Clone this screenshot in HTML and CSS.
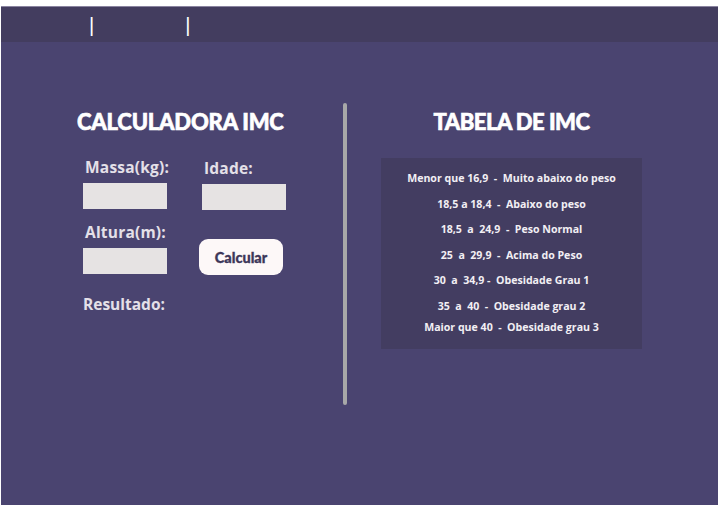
FILE: index.html
```html
<!DOCTYPE html>
<html lang="pt">
<head>
<meta charset="utf-8">
<title>Calculadora IMC</title>
<link rel="stylesheet" href="styles.css">
</head>
<body>
<div class="frame">
  <header class="topbar">
    <span class="sep sep-a">|</span>
    <span class="sep sep-b">|</span>
  </header>
  <main class="content">
    <section class="calc">
      <h1 class="calc-title">CALCULADORA IMC</h1>
      <div class="row">
        <div class="field">
          <label class="label">Massa(kg):</label>
          <input class="input" type="text">
        </div>
        <div class="field field-idade">
          <label class="label">Idade:</label>
          <input class="input" type="text">
        </div>
      </div>
      <div class="row row-2">
        <div class="field">
          <label class="label">Altura(m):</label>
          <input class="input" type="text">
        </div>
        <button class="btn" type="button">Calcular</button>
      </div>
      <p class="resultado">Resultado:</p>
    </section>
    <div class="divider"></div>
    <section class="tabela">
      <h2 class="tabela-title">TABELA DE IMC</h2>
      <div class="tabela-box">
        <p class="linha">Menor que 16,9  -  Muito abaixo do peso</p>
        <p class="linha">18,5 a 18,4  -  Abaixo do peso</p>
        <p class="linha">18,5  a  24,9  -  Peso Normal</p>
        <p class="linha">25  a  29,9  -  Acima do Peso</p>
        <p class="linha">30  a  34,9 -  Obesidade Grau 1</p>
        <p class="linha">35  a  40  -  Obesidade grau 2</p>
        <p class="linha linha-last">Maior que 40  -  Obesidade grau 3</p>
      </div>
    </section>
  </main>
</div>
</body>
</html>
```
FILE: styles.css
```css
* { box-sizing: border-box; }
html, body { margin: 0; padding: 0; background: #ffffff; }
body { width: 720px; height: 506px; overflow: hidden; }

.frame {
  margin: 6px 2px 0 1px;
  height: 499px;
  background: #4a4470;
  display: flex;
  flex-direction: column;
}

.topbar {
  height: 36px;
  background: #433d5f;
  border-top: 1px solid #8a84a0;
  display: flex;
  align-items: center;
  font-family: "Liberation Sans", sans-serif;
  color: #ffffff;
  font-size: 20px;
  line-height: 1;
}
.sep-a { margin-left: 88px; }
.sep-b { margin-left: 91px; }

.content {
  flex: 1;
  display: flex;
  align-items: flex-start;
}

.calc {
  width: 342px;
  padding-left: 76px;
  font-family: "Open Sans", sans-serif;
}
.calc-title {
  margin: 66px 0 0 0;
  font-family: "Lato", sans-serif;
  font-weight: 900;
  font-size: 22px;
  line-height: 28px;
  color: #ffffff;
  letter-spacing: -0.2px;
  -webkit-text-stroke: 0.6px #ffffff;
}

.row {
  display: flex;
  margin-top: 20px;
  margin-left: 6px;
}
.row-2 { margin-top: 11px; align-items: flex-end; }

.field {
  display: flex;
  flex-direction: column;
  width: 84px;
}
.field-idade { margin-left: 35px; padding-top: 1px; }

.label {
  font-weight: 700;
  font-size: 15.5px;
  line-height: 22px;
  color: #e4e0e8;
  margin-left: 2px;
  letter-spacing: 0.2px;
  white-space: nowrap;
}
.input {
  margin-top: 5px;
  width: 84px;
  height: 26px;
  border: none;
  background: #e6e3e3;
  padding: 0;
}

.btn {
  margin-left: 32px;
  margin-bottom: -1px;
  width: 84px;
  height: 36px;
  border: none;
  border-radius: 9px;
  background: #fdf8f8;
  color: #3d3759;
  font-family: "Lato", sans-serif;
  font-weight: 900;
  font-size: 14.5px;
  padding: 0;
  -webkit-text-stroke: 0.3px #3d3759;
}

.resultado {
  margin: 19px 0 0 6px;
  font-weight: 700;
  font-size: 15.5px;
  line-height: 22px;
  color: #e4e0e8;
}

.divider {
  width: 4px;
  height: 302px;
  margin-top: 61px;
  background: #a8a8a8;
  border-radius: 2px;
}

.tabela {
  padding-left: 34px;
  font-family: "Open Sans", sans-serif;
}
.tabela-title {
  width: 261px;
  margin: 66px 0 0 0;
  text-align: center;
  font-family: "Lato", sans-serif;
  font-weight: 900;
  font-size: 22px;
  line-height: 28px;
  color: #ffffff;
  letter-spacing: -0.5px;
  -webkit-text-stroke: 0.6px #ffffff;
}
.tabela-box {
  margin-top: 22px;
  width: 261px;
  height: 191px;
  background: #433d61;
  padding-top: 8px;
}
.linha {
  margin: 0;
  text-align: center;
  white-space: pre;
  font-weight: 700;
  font-size: 10.6px;
  line-height: 25.5px;
  color: #f2eff4;
}
.linha-last { margin-top: -4px; }
```
